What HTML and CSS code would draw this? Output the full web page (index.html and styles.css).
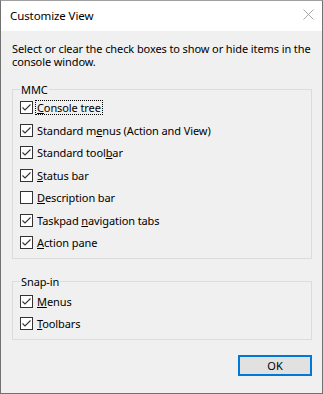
FILE: index.html
```html
<!doctype html>
<html lang="en">
  <head>
    <meta charset="UTF-8" />
    <meta name="viewport" content="width=device-width, initial-scale=1.0" />
    <title>Customize View</title>
    <link rel="stylesheet" href="styles.css">
  </head>
  <body>
    <div class="window">
      <div class="titlebar">
        <span class="title">Customize View</span>
        <svg class="close" width="11" height="11" viewBox="0 0 11 11">
          <path d="M0.5 0.5 L10.5 10.5 M10.5 0.5 L0.5 10.5" stroke="#a6a6a6" stroke-width="1" fill="none" />
        </svg>
      </div>

      <div class="content">
        <p class="intro">Select or clear the check boxes to show or hide items in the console window.</p>

        <fieldset class="group">
          <legend>MMC</legend>
          <label class="row">
            <span class="box checked"></span>
            <span class="text focus"><u>C</u>onsole tree</span>
          </label>
          <label class="row">
            <span class="box checked"></span>
            <span class="text">Standard m<u>e</u>nus (Action and View)</span>
          </label>
          <label class="row">
            <span class="box checked"></span>
            <span class="text">Standard tool<u>b</u>ar</span>
          </label>
          <label class="row">
            <span class="box checked"></span>
            <span class="text"><u>S</u>tatus bar</span>
          </label>
          <label class="row">
            <span class="box"></span>
            <span class="text"><u>D</u>escription bar</span>
          </label>
          <label class="row">
            <span class="box checked"></span>
            <span class="text">Taskpad <u>n</u>avigation tabs</span>
          </label>
          <label class="row">
            <span class="box checked"></span>
            <span class="text"><u>A</u>ction pane</span>
          </label>
        </fieldset>

        <fieldset class="group snapin">
          <legend>Snap-in</legend>
          <label class="row">
            <span class="box checked"></span>
            <span class="text"><u>M</u>enus</span>
          </label>
          <label class="row">
            <span class="box checked"></span>
            <span class="text"><u>T</u>oolbars</span>
          </label>
        </fieldset>

        <div class="buttons">
          <button class="ok">OK</button>
        </div>
      </div>
    </div>
  </body>
</html>
```

FILE: styles.css
```css
* {
  box-sizing: border-box;
}

body {
  margin: 0;
  font-family: "Noto Sans", "Liberation Sans", sans-serif;
  font-size: 11px;
  letter-spacing: -0.1px;
  color: #000;
}

.window {
  width: 323px;
  height: 394px;
  border: 1px solid #717171;
  border-top-color: #a0a0a0;
  background-color: #f0f0f0;
  display: flex;
  flex-direction: column;
}

.titlebar {
  height: 30px;
  background-color: #fff;
  display: flex;
  align-items: center;
  justify-content: space-between;
  padding: 0 8px 0 9px;
}

.title {
  font-size: 11.5px;
  line-height: 15px;
  margin-top: -1px;
}

.close {
  display: block;
  margin-top: -3px;
}

.content {
  padding: 0 10px 0 11px;
}

.intro {
  margin: 12px 0 0 0;
  line-height: 12.5px;
}

.group {
  margin: 13.5px 0 0 0;
  padding: 0 7px 4px 7px;
  border: 1px solid #dcdcdc;
}

.group legend {
  padding: 0 1px;
  line-height: 15px;
}

.snapin {
  margin-top: 15px;
  padding-top: 1px;
}

.row {
  display: flex;
  align-items: center;
  height: 22.5px;
}

.box {
  width: 13px;
  height: 13px;
  border: 1px solid #333;
  background-color: #fff;
  margin-right: 3px;
  flex-shrink: 0;
}

.box.checked {
  background-image: url("data:image/svg+xml;utf8,<svg xmlns='http://www.w3.org/2000/svg' width='11' height='11' viewBox='0 0 11 11'><path d='M1.5 5.5 L4 8 L9.5 2.5' stroke='%23333' stroke-width='1.1' fill='none'/></svg>");
  background-repeat: no-repeat;
}

.text {
  line-height: 13px;
  padding: 0 1px;
}

.text.focus {
  outline: 1px dotted #000;
}

.buttons {
  display: flex;
  justify-content: flex-end;
  margin-top: 15px;
}

.ok {
  width: 74px;
  height: 21px;
  font-family: inherit;
  font-size: 11px;
  letter-spacing: 0;
  background-color: #e1e1e1;
  border: 2px solid #0078d7;
  padding: 0;
  color: #000;
}
```
